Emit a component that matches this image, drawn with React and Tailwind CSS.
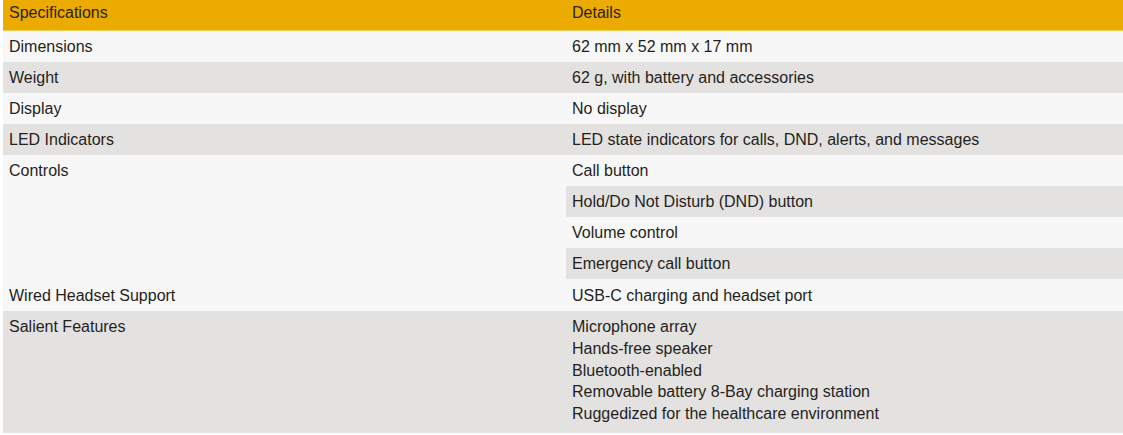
import React from 'react';

const rows = [
  { spec: 'Dimensions', details: ['62 mm x 52 mm x 17 mm'], bg: 'bg-[#f8f7f7]' },
  { spec: 'Weight', details: ['62 g, with battery and accessories'], bg: 'bg-[#e4e2e1]' },
  { spec: 'Display', details: ['No display'], bg: 'bg-[#f8f7f7]' },
  { spec: 'LED Indicators', details: ['LED state indicators for calls, DND, alerts, and messages'], bg: 'bg-[#e4e2e1]' },
];

const controls = [
  { text: 'Call button', bg: 'bg-[#f8f7f7]' },
  { text: 'Hold/Do Not Disturb (DND) button', bg: 'bg-[#e4e2e1]' },
  { text: 'Volume control', bg: 'bg-[#f8f7f7]' },
  { text: 'Emergency call button', bg: 'bg-[#e4e2e1]' },
];

const features = [
  'Microphone array',
  'Hands-free speaker',
  'Bluetooth-enabled',
  'Removable battery 8-Bay charging station',
  'Ruggedized for the healthcare environment',
];

const cell = 'px-[6px] py-[5px] leading-[21px] align-top font-normal text-left';

const App = () => {
  return (
    <div className="min-h-screen bg-white pl-[3px] text-[16px] text-[#231f20] font-['Liberation_Sans',Arial,sans-serif]">
      <table className="w-full border-collapse">
        <colgroup>
          <col className="w-[563px]" />
          <col />
        </colgroup>
        <thead>
          <tr className="bg-[#ebab00] text-[#2e2200]">
            <th className="px-[6px] pt-[2px] pb-[7px] leading-[21px] font-normal text-left">Specifications</th>
            <th className="px-[6px] pt-[2px] pb-[7px] leading-[21px] font-normal text-left">Details</th>
          </tr>
          <tr>
            <td colSpan={2} className="h-px p-0 bg-[#f2cc4a]"></td>
          </tr>
        </thead>
        <tbody>
          {rows.map((r) => (
            <tr key={r.spec} className={r.bg}>
              <td className={cell}>{r.spec}</td>
              <td className={cell}>{r.details[0]}</td>
            </tr>
          ))}
          {controls.map((c, i) => (
            <tr key={c.text}>
              {i === 0 && (
                <td rowSpan={4} className={`${cell} bg-[#f8f7f7]`}>Controls</td>
              )}
              <td className={`${cell} ${c.bg}`}>{c.text}</td>
            </tr>
          ))}
          <tr className="bg-[#f8f7f7]">
            <td className={`${cell} pt-[6px] pb-[5px]`}>Wired Headset Support</td>
            <td className={`${cell} pt-[6px] pb-[5px]`}>USB-C charging and headset port</td>
          </tr>
          <tr className="bg-[#e4e2e1]">
            <td className={cell}>Salient Features</td>
            <td className="px-[6px] pt-[5px] pb-[8px] leading-[21.75px] align-top">
              {features.map((f) => (
                <div key={f}>{f}</div>
              ))}
            </td>
          </tr>
        </tbody>
      </table>
    </div>
  );
};

export default App;
